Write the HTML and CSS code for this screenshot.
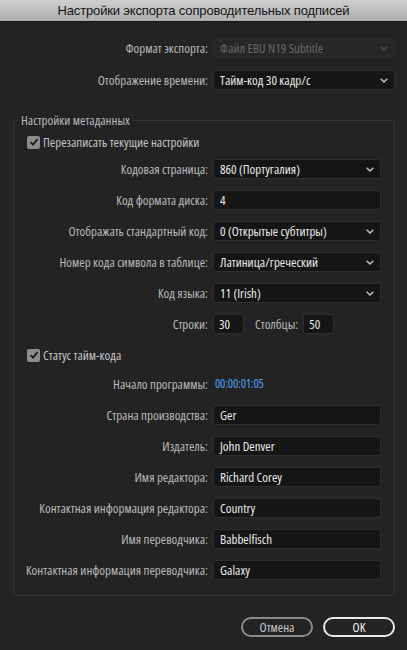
FILE: index.html
```html
<!DOCTYPE html>
<html lang="ru">
<head>
<meta charset="utf-8">
<title>Настройки экспорта сопроводительных подписей</title>
<link rel="stylesheet" href="styles.css">
</head>
<body>
<div class="dialog">
  <div class="titlebar">Настройки экспорта сопроводительных подписей</div>
  <div class="content">
    <div class="row top">
      <div class="label">Формат экспорта:</div>
      <div class="field select disabled wide"><span>Файл EBU N19 Subtitle</span><svg class="chev" viewBox="0 0 8 5" width="8" height="5"><path d="M0.7 0.7 L4 4 L7.3 0.7" /></svg></div>
    </div>
    <div class="row top r2">
      <div class="label">Отображение времени:</div>
      <div class="field select wide"><span>Тайм-код 30 кадр/с</span><svg class="chev" viewBox="0 0 8 5" width="8" height="5"><path d="M0.7 0.7 L4 4 L7.3 0.7" /></svg></div>
    </div>

    <div class="group">
      <div class="legend">Настройки метаданных</div>
      <div class="check c1"><span class="box"><svg viewBox="0 0 12 12" width="12" height="12"><path d="M2.6 6.2 L5 8.7 L9.6 3.2" /></svg></span><span>Перезаписать текущие настройки</span></div>

      <div class="row g first">
        <div class="label">Кодовая страница:</div>
        <div class="field select"><span>860 (Португалия)</span><svg class="chev" viewBox="0 0 8 5" width="8" height="5"><path d="M0.7 0.7 L4 4 L7.3 0.7" /></svg></div>
      </div>
      <div class="row g">
        <div class="label">Код формата диска:</div>
        <div class="field"><span>4</span></div>
      </div>
      <div class="row g">
        <div class="label">Отображать стандартный код:</div>
        <div class="field select"><span>0 (Открытые субтитры)</span><svg class="chev" viewBox="0 0 8 5" width="8" height="5"><path d="M0.7 0.7 L4 4 L7.3 0.7" /></svg></div>
      </div>
      <div class="row g">
        <div class="label">Номер кода символа в таблице:</div>
        <div class="field select"><span>Латиница/греческий</span><svg class="chev" viewBox="0 0 8 5" width="8" height="5"><path d="M0.7 0.7 L4 4 L7.3 0.7" /></svg></div>
      </div>
      <div class="row g">
        <div class="label">Код языка:</div>
        <div class="field select"><span>11 (Irish)</span><svg class="chev" viewBox="0 0 8 5" width="8" height="5"><path d="M0.7 0.7 L4 4 L7.3 0.7" /></svg></div>
      </div>
      <div class="row g">
        <div class="label">Строки:</div>
        <div class="field small"><span>30</span></div>
        <div class="sublabel">Столбцы:</div>
        <div class="field small"><span>50</span></div>
      </div>

      <div class="check c2"><span class="box"><svg viewBox="0 0 12 12" width="12" height="12"><path d="M2.6 6.2 L5 8.7 L9.6 3.2" /></svg></span><span>Статус тайм-кода</span></div>

      <div class="row g prog">
        <div class="label">Начало программы:</div>
        <div class="tc">00:00:01:05</div>
      </div>
      <div class="row g after">
        <div class="label">Страна производства:</div>
        <div class="field"><span>Ger</span></div>
      </div>
      <div class="row g">
        <div class="label">Издатель:</div>
        <div class="field"><span>John Denver</span></div>
      </div>
      <div class="row g">
        <div class="label">Имя редактора:</div>
        <div class="field"><span>Richard Corey</span></div>
      </div>
      <div class="row g">
        <div class="label">Контактная информация редактора:</div>
        <div class="field"><span>Country</span></div>
      </div>
      <div class="row g">
        <div class="label">Имя переводчика:</div>
        <div class="field"><span>Babbelfisch</span></div>
      </div>
      <div class="row g">
        <div class="label">Контактная информация переводчика:</div>
        <div class="field"><span>Galaxy</span></div>
      </div>
    </div>

    <div class="buttons">
      <div class="btn cancel">Отмена</div>
      <div class="btn ok">OK</div>
    </div>
  </div>
</div>
</body>
</html>
```

FILE: styles.css
```css
html, body {
  margin: 0;
  padding: 0;
  background: #232323;
}
body {
  width: 407px;
  height: 650px;
  overflow: hidden;
  font-family: "Open Sans", "DejaVu Sans Condensed", sans-serif;
  font-stretch: 75%;
  font-size: 13px;
  color: #b9b9b9;
}
.dialog {
  width: 407px;
  height: 650px;
  background: #232323;
}
.titlebar {
  height: 22px;
  line-height: 22px;
  text-align: center;
  font-family: "Liberation Sans", Arial, sans-serif;
  font-stretch: normal;
  font-size: 13px;
  letter-spacing: -0.15px;
  color: #141414;
  background: linear-gradient(#cfcfcf, #acacac);
  border-bottom: 1px solid #111;
  box-sizing: border-box;
}
.content {
  display: flex;
  flex-direction: column;
  padding-top: 16px;
}
.row {
  display: flex;
  align-items: center;
  height: 20px;
}
.row.top .label {
  width: 208px;
}
.row.r2 {
  margin-top: 12px;
}
.label {
  flex: none;
  text-align: right;
  line-height: 20px;
  white-space: nowrap;
  color: #b9b9b9;
}
.field {
  flex: none;
  box-sizing: border-box;
  height: 20px;
  margin-left: 5px;
  width: 168px;
  background: #151515;
  border: 1px solid #2e2e2e;
  border-radius: 2px;
  display: flex;
  align-items: center;
  justify-content: space-between;
  padding: 0 6px;
  color: #e8e8e8;
  white-space: nowrap;
}
.field.wide {
  width: 182px;
}
.field.small {
  width: 31px;
  padding: 0 5px;
}
.field.disabled {
  background: #272727;
  border-color: #2b2b2b;
  color: #686868;
}
.chev {
  flex: none;
}
.chev path {
  fill: none;
  stroke: #c8c8c8;
  stroke-width: 1.3;
}
.field.disabled .chev path {
  stroke: #4a4a4a;
}
.sublabel {
  margin-left: 11px;
  line-height: 20px;
  white-space: nowrap;
}
.group {
  margin: 30px 12px 0 13px;
  border: 1px solid #363636;
  border-radius: 2px;
  padding: 0 13px 15px 0;
  display: flex;
  flex-direction: column;
}
.legend {
  align-self: flex-start;
  margin: -9px 0 0 4px;
  padding: 0 3px;
  line-height: 16px;
  background: #232323;
  color: #b9b9b9;
}
.row.g .label {
  width: 194px;
}
.row.g {
  margin-top: 11px;
}
.row.g.first {
  margin-top: 10px;
}
.row.g.prog {
  margin-top: 12px;
}
.row.g.after {
  margin-top: 11px;
}
.check {
  display: flex;
  align-items: center;
  height: 14px;
  margin-left: 13px;
  color: #c4c4c4;
  white-space: nowrap;
}
.check.c1 {
  margin-top: 7px;
}
.check.c2 {
  margin-top: 14px;
}
.box {
  flex: none;
  width: 13px;
  height: 13px;
  border-radius: 2px;
  background: #8c8c8c;
  margin-right: 3px;
  display: flex;
  align-items: center;
  justify-content: center;
}
.box path {
  fill: none;
  stroke: #1c1c1c;
  stroke-width: 1.8;
}
.tc {
  margin-left: 7px;
  color: #4ea0f2;
  line-height: 20px;
  font-size: 12.5px;
  letter-spacing: -0.2px;
}
.buttons {
  display: flex;
  justify-content: flex-end;
  gap: 10px;
  padding-right: 12px;
  margin-top: 21px;
}
.btn {
  box-sizing: border-box;
  width: 72px;
  height: 20px;
  border-radius: 10px;
  text-align: center;
  line-height: 16px;
  color: #e6e6e6;
}
.btn.cancel {
  border: 2px solid #8a8a8a;
  color: #c8c8c8;
}
.btn.ok {
  border: 2px solid #e8e8e8;
  color: #f2f2f2;
}
```
